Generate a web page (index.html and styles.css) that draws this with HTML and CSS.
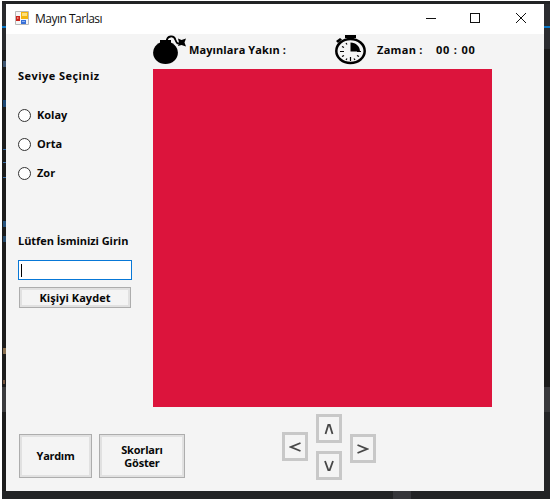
FILE: index.html
```html
<!DOCTYPE html>
<html lang="tr">
<head>
<meta charset="utf-8">
<title>Mayın Tarlası</title>
<link rel="stylesheet" href="styles.css">
</head>
<body>
<div class="desktop">
  <div class="backdrop left">
    <i class="l1"></i><i class="l2"></i><i class="l3"></i><i class="l4"></i><i class="l5"></i><i class="l6"></i><i class="l7"></i><i class="l8"></i><i class="l9"></i><i class="l10"></i><i class="l11"></i><i class="l12"></i>
  </div>
  <div class="backdrop right"><i class="r1"></i><i class="r2"></i><i class="r3"></i><i class="r4"></i></div>
  <i class="tab"></i>
  <main class="window">
    <header class="titlebar">
      <svg class="appicon" width="14" height="14" viewBox="0 0 14 14">
        <path d="M.5.5h13v13H.5z" fill="#f6f6f6" stroke="#b9b9b9"/>
        <path d="M6 1h7v7H6z" fill="#f4b50d"/><path d="M7 2h5v3H7z" fill="#ffe078"/>
        <path d="M1 5h4v5H1z" fill="#c9241d"/><path d="M2 6h1.500v2H2z" fill="#f08070"/>
        <path d="M6 9h5v4H6z" fill="#376fd6"/><path d="M7 10h3v1H7z" fill="#8bb0f4"/>
      </svg>
      <span class="title">Mayın Tarlası</span>
      <svg class="controls" width="100" height="12" viewBox="0 0 100 12" fill="none" stroke="#111" shape-rendering="crispEdges">
        <path d="M0 6.500h10M44.500 1.500h9v9h-9z"/><path d="M90 1l10 10M100 1L90 11" shape-rendering="auto"/>
      </svg>
    </header>
    <div class="client">
      <aside class="sidebar">
        <div class="label level">Seviye Seçiniz</div>
        <label class="option"><i class="radio"></i><span>Kolay</span></label>
        <label class="option"><i class="radio"></i><span>Orta</span></label>
        <label class="option"><i class="radio"></i><span>Zor</span></label>
        <div class="label name">Lütfen İsminizi Girin</div>
        <div class="textbox"><i class="caret"></i></div>
        <div class="button save"><span>Kişiyi Kaydet</span></div>
      </aside>
      <section class="game">
        <div class="status">
          <svg class="bomb" width="34" height="31" viewBox="0 0 34 31">
            <ellipse cx="12.500" cy="17.700" rx="12.400" ry="11.300"/>
            <path d="M7 5h11v6H7z"/>
            <path d="M13.500 7C14 0 21 0 22.500 5c1 3 2 4 4 3" fill="none" stroke="#000" stroke-width="1.800"/>
            <path d="M25 3.500l3.500 1.500L33 3.500 31.500 7.500l1.500 4-4.500-1.500-3.500 1 1-3.500z"/>
          </svg>
          <span class="label mines">Mayınlara Yakın :</span>
          <svg class="watch" width="31" height="30" viewBox="0 0 31 30">
            <ellipse cx="15.500" cy="16" rx="14.200" ry="12" fill="#f4f4f4" stroke="#000" stroke-width="2.500"/>
            <path d="M10 0h11v3h-3v2h-5V3h-3zM1 6l4-3 2 1.500L3 8z"/>
            <path d="M15.500 7.500v9H25c0-5-4-9-9.500-9z"/>
            <path d="M5 16.500h4M22 16.500h4M15.500 22v4M7 11.500l2 1M11 8l1 1.500M7 21.500l2-1M11 25l1-1.500M20 25l-1-1.500M24 21.500l-2-1" stroke="#000" stroke-width="1.200"/>
          </svg>
          <span class="label time">Zaman :</span>
          <span class="label clock">00 : 00</span>
        </div>
        <div class="board"></div>
      </section>
      <footer class="actions">
        <div class="button help"><span>Yardım</span></div>
        <div class="button scores">Skorları<br>Göster</div>
        <div class="pad">
          <div class="key west"><svg width="12" height="10"><path d="M11.500 1L2 5l9.500 4"/></svg></div>
          <div class="stack">
            <div class="key"><svg width="12" height="12"><path d="M2.500 11L5.300 2h1.400l2.800 9"/></svg></div>
            <div class="key"><svg width="12" height="12"><path d="M2 1l3.300 9h1.400L10 1"/></svg></div>
          </div>
          <div class="key east"><svg width="12" height="10"><path d="M.5 1L10 5 .5 9"/></svg></div>
        </div>
      </footer>
    </div>
  </main>
</div>
</body>
</html>
```
FILE: styles.css
```css
* { box-sizing: border-box; }
body { margin: 0; padding: 1px 1px 3px 2px; height: 502px; background: #fff; overflow: hidden; }
.desktop { position: relative; height: 498px; padding: 3px 6px 8px 4px; background: #222325; }
.backdrop { position: absolute; top: 3px; bottom: 8px; }
.left { left: 0; width: 4px; background: #1c1c1c; }
.right { right: 0; width: 6px; background: #1a1a1a; }
.backdrop i, .tab { position: absolute; }
.left i { left: 1px; width: 3px; height: 1px; background: #3a6ea5; }
.left .l1 { top: 0; left: 0; width: 4px; height: 46px; background: #292a2d; }
.left .l2 { top: 22px; left: 0; width: 4px; height: 2px; background: #0878c8; }
.left .l3 { top: 57px; height: 6px; background: #3d5470; }
.left .l4 { top: 96px; height: 7px; background: #1c4774; }
.left .l5 { top: 145px; }
.left .l6 { top: 158px; }
.left .l7 { top: 173px; }
.left .l8 { top: 217px; height: 6px; background: #27537e; }
.left .l9 { top: 232px; height: 6px; background: #244868; }
.left .l10 { top: 344px; height: 6px; background: #897050; }
.left .l11 { top: 383px; left: 0; width: 4px; height: 25px; background: #3b3b3d; }
.left .l12 { top: 376px; height: 4px; width: 2px; background: #755641; }
.right i { left: 0; width: 6px; }
.right .r1 { top: 0; height: 45px; background: #2b2c30; }
.right .r2 { top: 22px; height: 2px; background: #0878c8; }
.right .r3 { top: 383px; height: 25px; background: #38383b; }
.right .r4 { top: 408px; height: 79px; background: #242527; }
.tab { left: 391px; bottom: 0; width: 18px; height: 8px; background: #36363a; }
.window { position: relative; width: 538px; height: 487px; background: #f4f4f4; }
.titlebar { display: flex; align-items: center; height: 30px; padding: 0 18px 2px 9px; background: #fff; }
.title { margin: 2px 0 0 6px; color: #111; font: 12px/18px "Open Sans", sans-serif; letter-spacing: -.5px; white-space: nowrap; }
.controls { margin-left: auto; }
.client { display: grid; grid-template: 373px 84px / 147px 391px; }
.sidebar { padding: 34px 0 0 12px; }
.label, .option, .button { color: #080808; font: 700 11px/16px "Open Sans", sans-serif; white-space: nowrap; }
.level { margin-bottom: 23px; letter-spacing: .45px; }
.option { display: flex; align-items: center; height: 16px; margin-bottom: 13px; gap: 6px; }
.radio { width: 13px; height: 13px; border: 1px solid #333; border-radius: 50%; background: #fff; }
.name { margin-top: 52px; letter-spacing: -.05px; }
.textbox { width: 114px; height: 20px; margin: 11px 0 7px; padding: 3px 2px; border: 1px solid #0878d7; background: #fff; }
.caret { display: block; width: 1px; height: 13px; background: #000; }
.button { display: flex; flex-direction: column; align-items: center; justify-content: center; border: 1px solid #adadad; box-shadow: inset 0 0 0 2px #e1e1e1; background: #f4f4f4; text-align: center; }
.save { width: 112px; height: 21px; margin-left: 1px; letter-spacing: .05px; }
.status { display: flex; height: 35px; }
.bomb { margin-top: 1px; }
.mines { margin: 8px 0 0 2px; width: 100px; letter-spacing: .1px; }
.watch { margin: 1px 0 0 46px; }
.time { margin: 8px 0 0 11px; width: 59px; letter-spacing: .3px; }
.clock { margin-top: 8px; letter-spacing: .8px; }
.board { width: 339px; height: 338px; background: #dc143c; }
.actions { grid-column: 1 / 3; display: flex; padding: 7px 0 0 13px; }
.help { width: 73px; height: 44px; margin-top: 20px; letter-spacing: -.3px; }
.scores { width: 86px; height: 44px; margin: 20px 0 0 7px; line-height: 13px; display: block; padding-top: 8px; letter-spacing: -.2px; }
.pad { display: flex; margin-left: 97px; gap: 8px; }
.stack { display: flex; flex-direction: column; gap: 8px; }
.key { display: grid; place-items: center; width: 26px; height: 29px; border: 3px solid #c8c8c8; }
.west { margin-top: 18px; }
.east { margin-top: 20px; }
.key path { fill: none; stroke: #484848; stroke-width: 1.8; }
```
